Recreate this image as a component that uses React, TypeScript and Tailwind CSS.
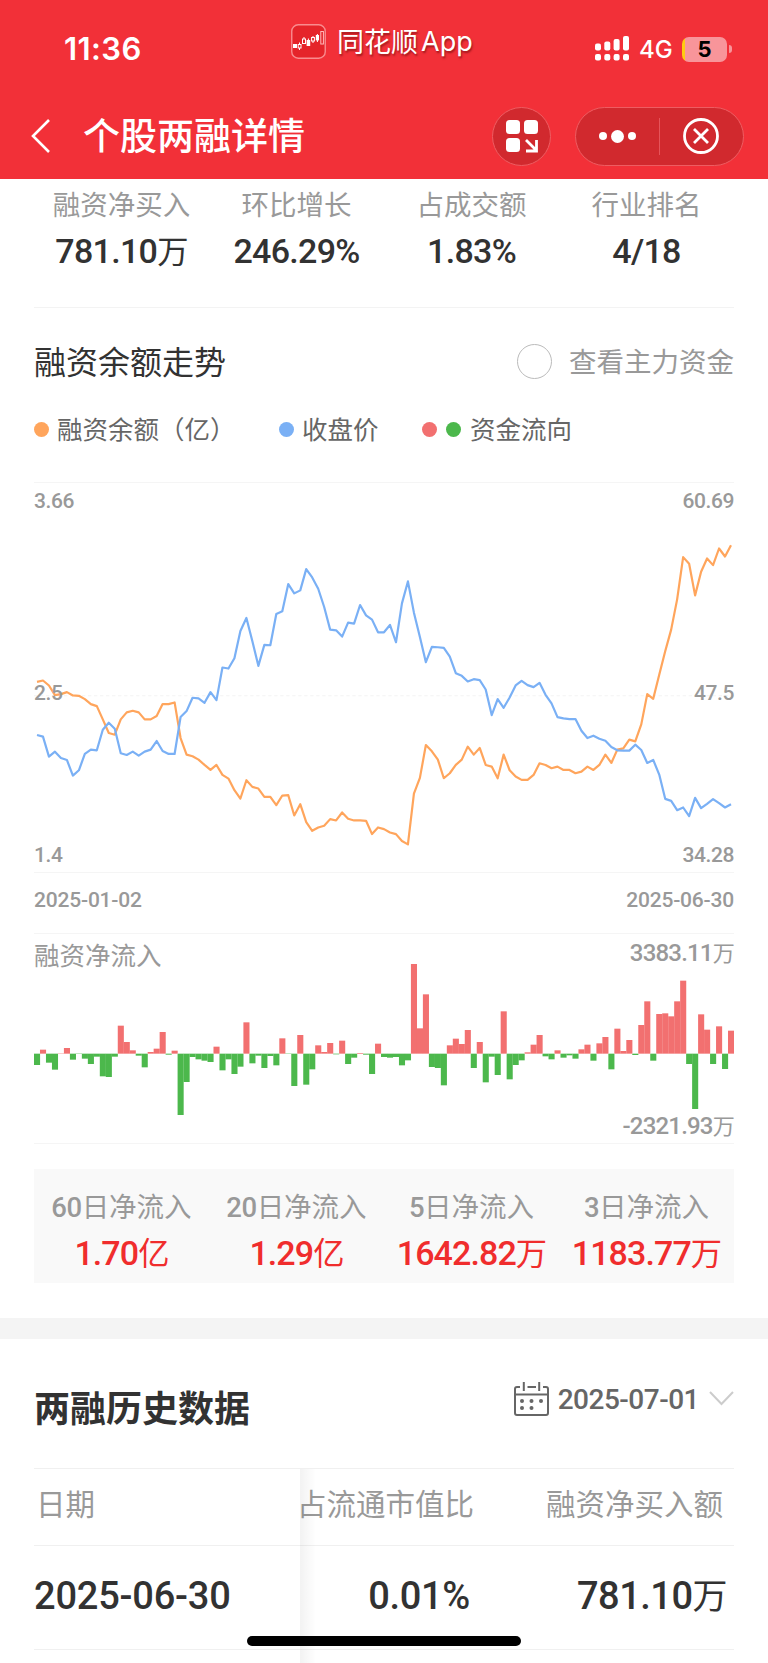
import React from "react";
import clsx from "clsx";

// y positions inside the 2098 x 1170 trend plot, one per trading day
const BALANCE = [
  635, 631, 646, 675, 672, 666, 676, 677, 687, 702, 708, 748, 789, 794, 748, 727, 722, 727, 748, 748,
  738, 702, 702, 697, 804, 854, 859, 869, 885, 900, 885, 915, 926, 961, 986, 931, 951, 956, 981, 981,
  1006, 977, 976, 1037, 1003, 1057, 1083, 1073, 1068, 1048, 1052, 1028, 1047, 1052, 1052, 1053, 1093,
  1073, 1078, 1088, 1093, 1114, 1124, 971, 924, 825, 844, 869, 925, 910, 885, 869, 830, 854, 834, 885,
  890, 925, 854, 901, 920, 930, 930, 915, 880, 885, 895, 890, 900, 900, 910, 905, 890, 900, 885, 854,
  879, 839, 835, 809, 814, 763, 672, 686, 614, 543, 478, 387, 260, 280, 375, 304, 264, 284, 234, 258,
  224,
];

const CLOSE = [
  795, 800, 860, 845, 864, 870, 917, 901, 852, 839, 841, 779, 758, 776, 850, 855, 845, 857, 845, 839,
  813, 843, 852, 852, 741, 723, 683, 685, 698, 666, 690, 592, 595, 564, 482, 443, 513, 587, 524, 525,
  431, 423, 341, 369, 360, 296, 321, 355, 410, 478, 480, 499, 457, 460, 404, 435, 448, 486, 486, 464,
  516, 399, 333, 427, 500, 576, 530, 531, 533, 559, 609, 617, 634, 627, 630, 658, 735, 687, 713, 682,
  646, 632, 645, 651, 638, 674, 700, 741, 745, 747, 747, 782, 804, 797, 806, 812, 831, 841, 842, 842,
  824, 840, 879, 870, 914, 987, 993, 1021, 1013, 1039, 984, 1015, 1002, 988, 1000, 1013, 1003,
];

// daily net inflow, positive is up
const FLOW = [
  -34, 12, -27, -48, 1, 17, -18, -1, -15, -31, -9, -68, -70, -9, 84, 35, 10, -6, -41, 5, 15, 65, -3, 9,
  -184, -85, -10, -17, -21, -25, 21, -50, -17, -61, -39, 94, -29, -6, -43, -7, -35, 46, -1, -97, 56,
  -93, -47, 25, 5, 32, -2, 39, -31, -12, 2, -3, -61, 30, -10, -12, -10, -35, -20, 269, 76, 178, -40,
  -43, -95, 25, 45, 29, 71, -43, 35, -86, -9, -64, 127, -77, -34, -20, 4, 27, 56, -8, -17, 10, -12,
  -5, -15, 13, 27, -21, 31, 50, -47, 75, 8, 41, -4, 86, 157, -21, 119, 121, 112, 157, 219, -31, -166,
  118, 72, -31, 82, -46, 69,
];

const STEP = 2098 / 117;

const toPoints = (values: number[]) =>
  values.map((y, i) => `${((i + 0.5) * STEP).toFixed(1)},${y - 37}`).join(" ");

const STATS = [
  { label: "融资净买入", value: "781.10", unit: "万" },
  { label: "环比增长", value: "246.29%" },
  { label: "占成交额", value: "1.83%" },
  { label: "行业排名", value: "4/18" },
];

const INFLOWS = [
  { days: "60", value: "1.70", unit: "亿" },
  { days: "20", value: "1.29", unit: "亿" },
  { days: "5", value: "1642.82", unit: "万" },
  { days: "3", value: "1183.77", unit: "万" },
];

const Num = ({
  children,
  unit,
  className,
}: {
  children: React.ReactNode;
  unit?: string;
  className?: string;
}) => (
  <span className={clsx("font-['Roboto','Noto_Sans_CJK_SC',sans-serif] font-medium whitespace-nowrap", className)}>
    {children}
    {unit && (
      <span className="font-['Noto_Sans_CJK_SC',sans-serif] text-[0.92em] leading-none font-normal">{unit}</span>
    )}
  </span>
);

const Dot = ({ className }: { className: string }) => (
  <span className={clsx("size-[15px] shrink-0 rounded-full", className)} />
);

const AppLogo = () => (
  <svg width="35" height="35" viewBox="0 0 35 35" fill="none">
    <rect x="0.75" y="0.75" width="33.5" height="33.5" rx="6.5" fill="#e5242a" stroke="#f98b8e" strokeWidth="1.4" />
    <g fill="#fff">
      <rect x="2" y="20" width="4" height="4" />
      <rect x="15.6" y="16" width="3.6" height="6" />
      <rect x="24.8" y="11" width="3.2" height="5.4" />
    </g>
    <g stroke="#fff" strokeWidth="1">
      <path d="M8.5 18.5v2m0 3.5v2M13 13v2m4.4-.5v2M22 12v1.5M22 17v2M26.4 10v8" />
      <rect x="7.2" y="20.5" width="2.8" height="3.5" />
      <rect x="11.5" y="15" width="3" height="4.5" />
      <rect x="20.6" y="13.5" width="2.8" height="3.5" />
      <rect x="29.8" y="7.5" width="2.6" height="12.5" stroke="#fbb" />
    </g>
  </svg>
);

const SignalIcon = () => (
  <svg width="34" height="26" viewBox="0 0 34 26" fill="#fff">
    <rect x="0" y="7.5" width="6" height="7" rx="2" />
    <rect x="9.3" y="5.5" width="6" height="9" rx="2" />
    <rect x="18.6" y="3" width="6" height="11.5" rx="2" />
    <rect x="28" y="0" width="6" height="14.5" rx="2" />
    <rect x="0" y="18" width="6" height="6.5" rx="2" />
    <rect x="9.3" y="18" width="6" height="6.5" rx="2" />
    <rect x="18.6" y="18" width="6" height="6.5" rx="2" />
    <rect x="28" y="18" width="6" height="6.5" rx="2" />
  </svg>
);

const Battery = () => (
  <div className="flex items-center gap-[2px]">
    <div className="flex h-[25px] w-[45px] items-center justify-center overflow-hidden rounded-[7px] bg-linear-to-r from-[#ffcb10] from-6% to-[#f8959a] to-6%">
      <span className="font-['Inter',sans-serif] text-[22px] font-bold text-black">5</span>
    </div>
    <div className="h-2 w-[3px] rounded-r-full bg-[#f8959a]" />
  </div>
);

const Header = () => (
  <header className="h-[179px] bg-[#f23038] text-white">
    <div className="flex h-[98px] items-start">
      <span className="mt-[31px] ml-[64px] w-[227px] font-['Inter',sans-serif] text-[31px] leading-[36px] font-semibold tracking-[0.4px]">
        11:36
      </span>
      <div className="mt-6 flex items-center gap-[11px]">
        <AppLogo />
        <span className="flex items-center gap-[3px] text-[27px] leading-[33px] [text-shadow:1px_2px_2px_rgba(80,0,0,0.5)]">
          <span className="-mt-[2px]">同花顺</span>
          <span className="font-['Inter',sans-serif] text-[27px]">App</span>
        </span>
      </div>
      <div className="mt-9 mr-[36px] ml-auto flex h-[26px] items-center">
        <SignalIcon />
        <span className="ml-[10px] w-[43px] pt-[2px] font-['Inter',sans-serif] text-[24px] font-medium">4G</span>
        <Battery />
      </div>
    </div>
    <div className="flex h-[76px] items-center">
      <svg className="ml-[30px]" width="21" height="36" viewBox="0 0 21 36" fill="none" stroke="#fff" strokeWidth="2.6">
        <path d="M19 2 3 18l16 16" />
      </svg>
      <h1 className="mb-[3px] ml-[32px] text-[37px] leading-none font-medium">个股两融详情</h1>
      <div className="mr-[18px] ml-auto flex size-[59px] items-center justify-center rounded-full border border-[#ee5d62] bg-[#d1292e]">
        <svg className="ml-[1px]" width="33" height="33" viewBox="0 0 33 33" fill="#fff">
          <rect x="0" y="0" width="14" height="14" rx="3.5" />
          <rect x="18" y="0" width="14" height="14" rx="3.5" />
          <rect x="0" y="18" width="14" height="14" rx="3.5" />
          <path d="M20 20 30.5 30.5M30.5 20v11H20" fill="none" stroke="#fff" strokeWidth="2.8" />
        </svg>
      </div>
      <div className="mr-[24px] ml-[6px] flex h-[59px] w-[169px] items-center rounded-full border border-[#ee5d62] bg-[#d1292e]">
        <div className="flex w-[83px] items-center justify-center gap-[4px]">
          <span className="size-2 rounded-full bg-white" />
          <span className="size-[13px] rounded-full bg-white" />
          <span className="size-2 rounded-full bg-white" />
        </div>
        <span className="h-[37px] w-px bg-[#e5545a]" />
        <svg className="ml-[23px]" width="36" height="36" viewBox="0 0 36 36" fill="none" stroke="#fff" strokeWidth="2.8">
          <circle cx="18" cy="18" r="16.5" />
          <path d="m11 11 14 14M25 11 11 25" />
        </svg>
      </div>
    </div>
  </header>
);

const TrendChart = () => (
  <div className="relative h-[391px] border-y border-[#f5f5f5] text-[21px] leading-none tracking-[-0.4px] text-[#999]">
    <svg className="h-full w-full" viewBox="0 0 2098 1170" preserveAspectRatio="none" fill="none" strokeWidth="6.6" strokeLinejoin="round">
      <path d="M0 640H2098" stroke="#f3f3f3" strokeWidth="3" strokeDasharray="10 8" />
      <polyline points={toPoints(BALANCE)} stroke="#ffa55c" />
      <polyline points={toPoints(CLOSE)} stroke="#7ab0f5" />
    </svg>
    <Num className="absolute top-[8px] left-0">3.66</Num>
    <Num className="absolute top-[200px] left-0">2.5</Num>
    <Num className="absolute bottom-[6px] left-0">1.4</Num>
    <Num className="absolute top-[8px] right-0">60.69</Num>
    <Num className="absolute top-[200px] right-0">47.5</Num>
    <Num className="absolute right-0 bottom-[6px]">34.28</Num>
  </div>
);

const FlowChart = () => (
  <div className="relative h-[211px] border-y border-[#f5f5f5] leading-none text-[#999]">
    <svg className="h-full w-full" viewBox="0 0 2098 627" preserveAspectRatio="none">
      {FLOW.map((v, i) => (
        <rect
          key={i}
          x={i * STEP}
          y={v > 0 ? 359 - v : 359}
          width={STEP + 0.3}
          height={Math.abs(v)}
          fill={v > 0 ? "#f27070" : "#4cb84c"}
        />
      ))}
    </svg>
    <span className="absolute top-[7px] left-0 text-[25.5px]">融资净流入</span>
    <Num className="absolute top-[6px] right-0 text-[24px] tracking-[-0.8px]" unit="万">3383.11</Num>
    <Num className="absolute right-0 bottom-[5px] text-[24px] tracking-[-0.8px]" unit="万">-2321.93</Num>
  </div>
);

const CalendarIcon = () => (
  <svg width="35" height="34" viewBox="0 0 35 34" fill="none" stroke="#666" strokeWidth="2">
    <path d="M6 5H3a2 2 0 0 0-2 2v24a2 2 0 0 0 2 2h29a2 2 0 0 0 2-2V7a2 2 0 0 0-2-2h-3M13.5 5H22M9.800 0v9M25.200 0v9M1 12.500h33" />
    <g fill="#666" stroke="none">
      <circle cx="8" cy="19" r="2" />
      <circle cx="17.5" cy="19" r="2" />
      <circle cx="27" cy="19" r="2" />
      <circle cx="8" cy="26" r="2" />
      <circle cx="17.5" cy="26" r="2" />
    </g>
  </svg>
);

export default function App() {
  return (
    <div className="relative h-[1663px] w-[768px] overflow-hidden bg-white font-['Noto_Sans_CJK_SC',sans-serif] text-[#323232]">
      <Header />

      <section className="px-[34px]">
        <div className="grid h-[129px] grid-cols-4 border-b border-[#f3f3f3] pt-[10px] text-center">
          {STATS.map((s) => (
            <div key={s.label}>
              <div className="text-[27.5px] leading-[28px] text-[#999]">{s.label}</div>
              <Num className="mt-[15px] block text-[34px] leading-[38px] tracking-[-0.7px]" unit={s.unit}>
                {s.value}
              </Num>
            </div>
          ))}
        </div>

        <div className="flex h-[108px] items-center justify-between pb-[2px]">
          <h2 className="pb-[2px] text-[32px] leading-none">融资余额走势</h2>
          <label className="flex items-center gap-[17px] text-[27.5px] leading-none text-[#999]">
            <span className="size-[35px] rounded-full border border-[#bbb]" />
            <span className="pb-px">查看主力资金</span>
          </label>
        </div>

        <div className="flex h-[66px] items-start text-[25.5px] leading-[28px] text-[#666]">
          <span className="flex w-[245px] items-center gap-2">
            <Dot className="bg-[#ffa55c]" />
            <span className="-mt-[2px]">融资余额（亿）</span>
          </span>
          <span className="flex w-[143px] items-center gap-2">
            <Dot className="bg-[#7ab0f5]" />
            <span className="-mt-[2px]">收盘价</span>
          </span>
          <span className="flex items-center gap-[9px]">
            <Dot className="bg-[#f27070]" />
            <Dot className="bg-[#4cb84c]" />
            <span className="-mt-[2px]">资金流向</span>
          </span>
        </div>

        <TrendChart />
        <div className="flex h-[60px] items-center justify-between pb-[5px] text-[21px] tracking-[-0.2px] text-[#999]">
          <Num>2025-01-02</Num>
          <Num>2025-06-30</Num>
        </div>
        <FlowChart />

        <div className="mt-[25px] grid h-[114px] grid-cols-4 bg-[#f9f9f9] pt-[22px] text-center">
          {INFLOWS.map((f) => (
            <div key={f.days}>
              <div className="h-[28px] text-[27.5px] leading-[28px] text-[#999]">
                <Num className="tracking-[-0.5px]">{f.days}</Num>日净流入
              </div>
              <Num className="mt-[15px] block text-[34px] leading-[38px] tracking-[-0.9px] text-[#f02d2d]" unit={f.unit}>
                {f.value}
              </Num>
            </div>
          ))}
        </div>
      </section>

      <div className="mt-[35px] h-[21px] bg-[#f4f4f4]" />

      <section className="px-[34px]">
        <div className="flex h-[130px] justify-between border-b border-[#f0f0f0]">
          <h2 className="mt-[49px] text-[36px] leading-[36px] font-bold">两融历史数据</h2>
          <div className="mt-[42px] flex h-[35px] items-center text-[28px] text-[#666]">
            <CalendarIcon />
            <Num className="mt-[3px] ml-[9px] tracking-[-0.5px]">2025-07-01</Num>
            <svg className="ml-[10px]" width="25" height="15" viewBox="0 0 25 15" fill="none" stroke="#ccc" strokeWidth="2">
              <path d="m1 1 11.5 12L24 1" />
            </svg>
          </div>
        </div>

        <div className="relative">
          <div className="grid h-[77px] grid-cols-[265px_175px_1fr] items-center border-b border-[#f0f0f0] pb-[8px] text-[29.5px] leading-none whitespace-nowrap text-[#999]">
            <span className="pl-[2px]">日期</span>
            <span className="flex justify-end">占流通市值比</span>
            <span className="pr-[11px] text-right">融资净买入额</span>
          </div>
          <div className="grid h-[104px] grid-cols-[265px_175px_1fr] items-center border-b border-[#f0f0f0] pb-[4px] text-[38px] leading-none">
            <Num className="tracking-[-0.2px]">2025-06-30</Num>
            <Num className="pr-[4px] text-right tracking-[-0.3px]">0.01%</Num>
            <Num className="pr-[7px] text-right tracking-[-0.5px]" unit="万">781.10</Num>
          </div>
          {/* edge shadow of the pinned date column */}
          <div className="absolute top-0 left-[266px] h-[196px] w-4 bg-linear-to-r from-black/5 to-transparent" />
        </div>
      </section>

      <div className="absolute bottom-[17px] left-[247px] h-[10px] w-[274px] rounded-full bg-black" />
    </div>
  );
}
